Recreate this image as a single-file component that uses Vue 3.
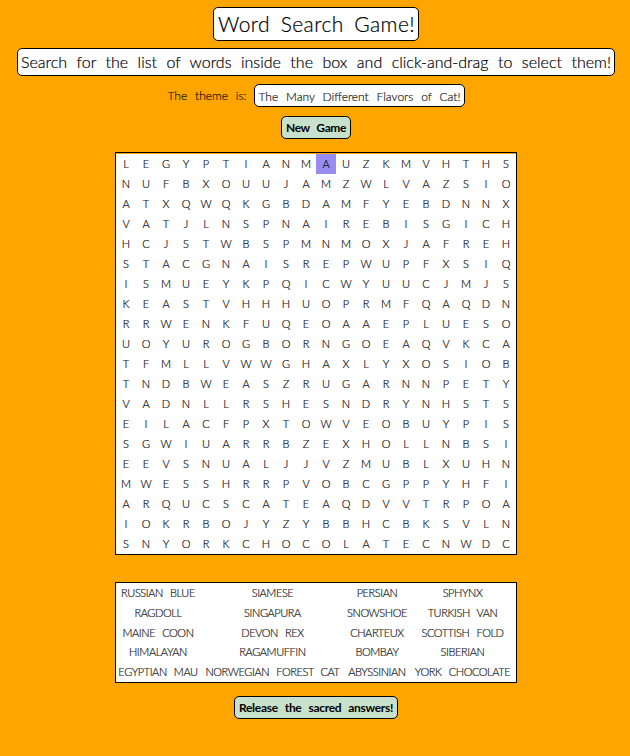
<script setup>
import { ref } from 'vue'

const grid = [
  'LEGYPTIANMAUZKMVHTHS',
  'NUFBXOUUJAMZWLVAZSIO',
  'ATXQWQKGBDAMFYEBDNNX',
  'VATJLNSPNAIREBISGICH',
  'HCJSTWBSPMNMOXJAFREH',
  'STACGNAISREPWUPFXSIQ',
  'ISMUEYKPQICWYUUCJMJS',
  'KEASTVHHHUOPRMFQAQDN',
  'RRWENKFUQEOAAEPLUESO',
  'UOYUROGBORNGOEAQVKCA',
  'TFMLLVWWGHAXLYXOSIOB',
  'TNDBWEASZRUGARNNPETY',
  'VADNLLRSHESNDRYNHSTS',
  'EILACFPXTOWVEOBUYPIS',
  'SGWIUARRBZEXHOLLNBSI',
  'EEVSNUALJJVZMUBLXUHN',
  'MWESSHRRPVOBCGPPYHFI',
  'ARQUCSCATEAQDVVTRPOA',
  'IOKRBOJYZYBBHCBKSVLN',
  'SNYORKCHOCOLATECNWDC'
]
const words = [
  ['RUSSIAN BLUE', 'SIAMESE', 'PERSIAN', 'SPHYNX'],
  ['RAGDOLL', 'SINGAPURA', 'SNOWSHOE', 'TURKISH VAN'],
  ['MAINE COON', 'DEVON REX', 'CHARTEUX', 'SCOTTISH FOLD'],
  ['HIMALAYAN', 'RAGAMUFFIN', 'BOMBAY', 'SIBERIAN'],
  ['EGYPTIAN MAU', 'NORWEGIAN FOREST CAT', 'ABYSSINIAN', 'YORK CHOCOLATE']
]
const active = ref('0-10')
</script>

<template>
  <main class="page">
    <h1 class="box title">Word Search Game!</h1>
    <h2 class="box subtitle">Search for the list of words inside the box and click-and-drag to select them!</h2>
    <div class="theme">
      <span class="theme-label">The theme is:</span>
      <span class="box theme-name">The Many Different Flavors of Cat!</span>
    </div>
    <button class="box btn new-game">New Game</button>
    <section class="puzzle">
      <div v-for="(row, r) in grid" :key="r" class="row">
        <span
          v-for="(ch, c) in row"
          :key="c"
          class="cell"
          :class="{ active: active === r + '-' + c }"
          @mousedown="active = r + '-' + c"
        >{{ ch }}</span>
      </div>
    </section>
    <section class="words">
      <template v-for="(line, i) in words" :key="i">
        <span v-for="w in line" :key="w" class="word">{{ w }}</span>
      </template>
    </section>
    <button class="box btn answers">Release the sacred answers!</button>
  </main>
</template>

<style>
body {
  background: #ffa500;
}
</style>

<style scoped>
.page {
  box-sizing: border-box;
  height: 756px;
  padding-top: 7px;
  display: flex;
  flex-direction: column;
  align-items: center;
  background: #ffa500;
  color: #000;
  font-family: Lato, "Liberation Sans", sans-serif;
  font-weight: 300;
  -webkit-text-stroke: 0.2px;
  user-select: none;
}
.box {
  box-sizing: border-box;
  display: block;
  margin: 0;
  border: 1px solid #000;
  border-radius: 5px;
  background: #fff;
  white-space: nowrap;
  text-align: justify;
  text-align-last: justify;
}
.title {
  width: 206px;
  height: 34px;
  margin-left: 2px;
  padding: 0 3px 0 4px;
  font-size: 21px;
  line-height: 32px;
  font-weight: 300;
  letter-spacing: 0.4px;
}
.subtitle {
  width: 598px;
  height: 28px;
  margin: 7px 0 0 2px;
  padding: 0 3px;
  font-size: 16px;
  line-height: 26px;
  font-weight: 300;
  letter-spacing: 0;
}
.theme {
  display: flex;
  align-items: center;
  margin: 8px 0 0 2px;
  gap: 7px;
  font-size: 12px;
}
.theme-label {
  width: 79px;
  line-height: 23px;
  color: #201500;
  text-align-last: justify;
  white-space: nowrap;
}
.theme-name {
  width: 211px;
  height: 23px;
  padding: 0 3px 0 4px;
  line-height: 24px;
  color: #222;
}
.btn {
  height: 23px;
  padding: 0 4px;
  background: #c8e1cc;
  color: #000;
  font-family: inherit;
  font-size: 12px;
  line-height: 21px;
  font-weight: 700;
  -webkit-text-stroke: 0;
}
.new-game {
  width: 70px;
  margin: 9px 0 0 2px;
  letter-spacing: -0.4px;
}
.puzzle {
  margin: 13px 0 0 2px;
  border: 1px solid #000;
  padding-top: 1px;
  background: #fff content-box;
  color: #111;
  font-size: 11px;
}
.row {
  display: flex;
}
.cell {
  width: 20px;
  height: 20px;
  line-height: 20px;
  text-align: center;
}
.active {
  background: #998cf0;
}
.words {
  box-sizing: border-box;
  height: 101px;
  display: grid;
  grid-template-columns: 84px 145px 64px 107px;
  grid-auto-rows: 19.75px;
  margin: 27px 0 0 2px;
  border: 1px solid #000;
  background: #fff;
  color: #222;
  font-size: 11px;
  line-height: 20px;
  letter-spacing: -0.42px;
  word-spacing: 4.5px;
  text-align: center;
  white-space: nowrap;
}
.answers {
  width: 164px;
  margin: 13px 0 0 2px;
  letter-spacing: -0.3px;
}
</style>
